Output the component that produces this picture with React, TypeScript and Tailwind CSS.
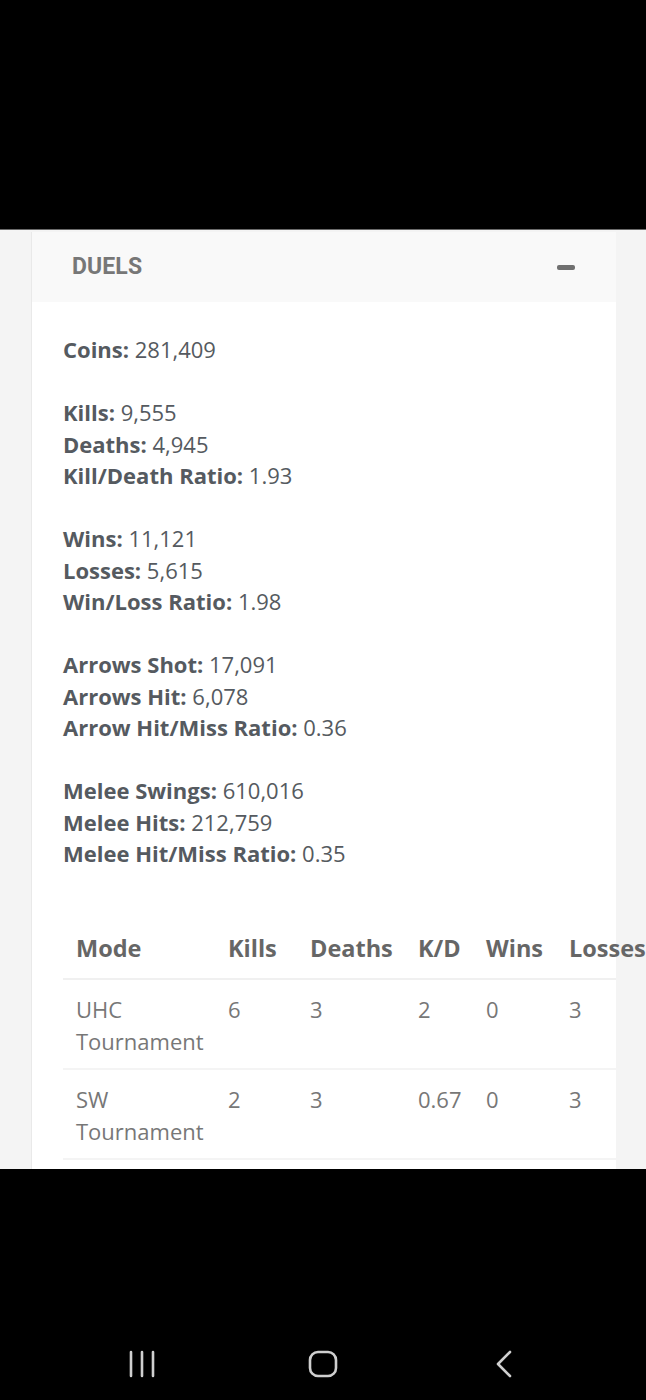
const groups: [string, string][][] = [
  [["Coins", "281,409"]],
  [
    ["Kills", "9,555"],
    ["Deaths", "4,945"],
    ["Kill/Death Ratio", "1.93"],
  ],
  [
    ["Wins", "11,121"],
    ["Losses", "5,615"],
    ["Win/Loss Ratio", "1.98"],
  ],
  [
    ["Arrows Shot", "17,091"],
    ["Arrows Hit", "6,078"],
    ["Arrow Hit/Miss Ratio", "0.36"],
  ],
  [
    ["Melee Swings", "610,016"],
    ["Melee Hits", "212,759"],
    ["Melee Hit/Miss Ratio", "0.35"],
  ],
];

const columns = [
  { label: "Mode", width: "w-[152px]" },
  { label: "Kills", width: "w-[82px]" },
  { label: "Deaths", width: "w-[108px]" },
  { label: "K/D", width: "w-[68px]" },
  { label: "Wins", width: "w-[83px]" },
  { label: "Losses", width: "w-[60px]" },
];

const modes = [
  ["UHC Tournament", "6", "3", "2", "0", "3"],
  ["SW Tournament", "2", "3", "0.67", "0", "3"],
];

function NavBar() {
  return (
    <div className="relative h-[231px] bg-black">
      <svg className="absolute left-[128px] top-[181px] h-[28px] w-[28px]" viewBox="0 0 28 28" fill="none" stroke="#cfcfcf" strokeWidth="2.6" strokeLinecap="round">
        <path d="M3 2v24M14 2v24M25 2v24" />
      </svg>
      <svg className="absolute left-[308px] top-[181px] h-[28px] w-[30px]" viewBox="0 0 30 28" fill="none" stroke="#cfcfcf" strokeWidth="2.6">
        <rect x="2" y="2" width="26" height="24" rx="8" />
      </svg>
      <svg className="absolute left-[494px] top-[181px] h-[28px] w-[20px]" viewBox="0 0 20 28" fill="none" stroke="#cfcfcf" strokeWidth="2.6" strokeLinecap="round" strokeLinejoin="round">
        <path d="M16 2L4 14l12 12" />
      </svg>
    </div>
  );
}

export default function App() {
  return (
    <div className="flex h-[1400px] w-[646px] flex-col overflow-hidden bg-black" style={{ fontFamily: '"Open Sans", sans-serif' }}>
      <div className="h-[230px] shrink-0 border-b border-[#6a6a6a] bg-black" />

      <div className="h-[939px] shrink-0 overflow-hidden bg-[#f4f4f4] pl-[31px] pt-[2px]">
        <div className="h-full w-[585px] border-l border-[#e9e9e9] bg-white">
          <div className="flex h-[70px] items-center justify-between bg-[#f9f9f9] pl-[40px] pr-[41px]">
            <span className="text-[23px] font-bold tracking-[0.1px] text-[#777777]" style={{ fontFamily: "Roboto, sans-serif" }}>
              DUELS
            </span>
            <span className="h-[5px] w-[18px] rounded-[2px] bg-[#707070]" />
          </div>

          <div className="pl-[31px] pt-[32px] text-[22px] leading-[31.5px] text-[#555a60]">
            {groups.map((group, gi) => (
              <div key={gi} className="mb-[31.5px]">
                {group.map(([label, value]) => (
                  <div key={label}>
                    <span className="font-bold">{label}:</span> {value}
                  </div>
                ))}
              </div>
            ))}
          </div>

          <table className="ml-[31px] mt-[51px] w-[553px] table-fixed border-collapse leading-[31.5px]">
            <thead>
              <tr className="border-b-2 border-[#f0f0f0]">
                {columns.map((c) => (
                  <th key={c.label} className={`${c.width} whitespace-nowrap px-[13px] pb-[14px] pt-[12px] text-left text-[23.5px] font-bold text-[#666666]`}>
                    {c.label}
                  </th>
                ))}
              </tr>
            </thead>
            <tbody>
              {modes.map((row) => (
                <tr key={row[0]} className="border-b-2 border-[#f4f4f4]">
                  {row.map((cell, i) => (
                    <td key={i} className="px-[13px] pb-[11px] pt-[14px] align-top text-[22px] text-[#777777]">
                      {cell}
                    </td>
                  ))}
                </tr>
              ))}
            </tbody>
          </table>
        </div>
      </div>

      <NavBar />
    </div>
  );
}
